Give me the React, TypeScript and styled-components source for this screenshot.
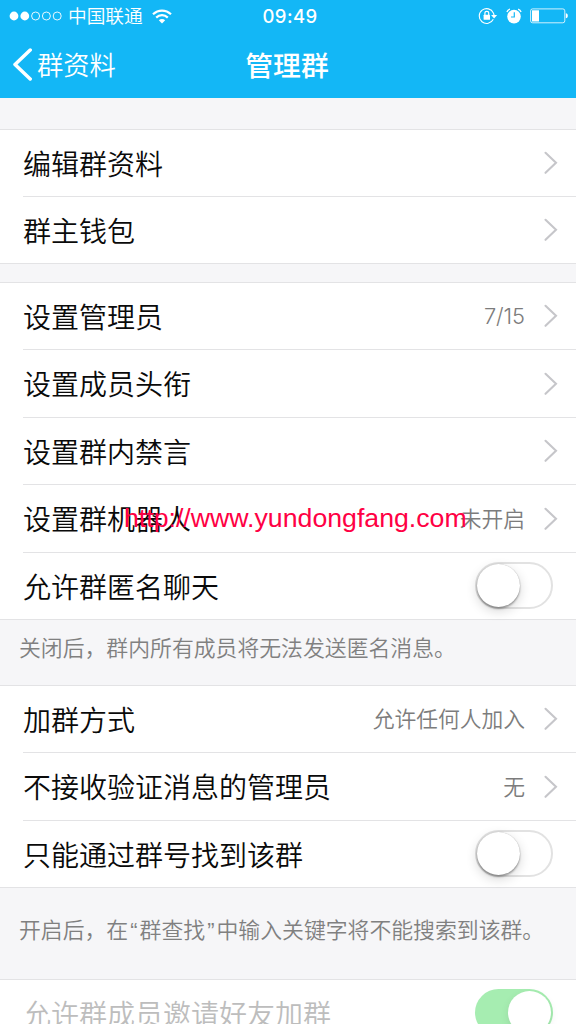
import React from "react";
import styled, { createGlobalStyle } from "styled-components";

const GlobalStyle = createGlobalStyle`
  * { box-sizing: border-box; }
  html, body { margin: 0; padding: 0; }
  body {
    background: #f6f6f8;
    font-family: Inter, "Noto Sans CJK SC", sans-serif;
    color: #0a0a0a;
  }
`;

const Screen = styled.main`
  position: relative;
  width: 576px;
  height: 1024px;
  overflow: hidden;
  background: #f6f6f8;
`;

const Header = styled.header`
  height: 98px;
  background: #13b7f6;
  color: #fff;
`;

const StatusBar = styled.div`
  display: grid;
  grid-template-columns: 1fr auto 1fr;
  align-items: center;
  height: 32px;
  padding: 0 8px 0 9px;
`;

const StatusLeft = styled.div`
  display: flex;
  align-items: center;
`;

const Carrier = styled.span`
  margin: -2px 9px 0 5px;
  font: 350 18.7px/32px "Noto Sans CJK SC", sans-serif;
`;

const Clock = styled.span`
  font-size: 18.5px;
  font-weight: 500;
  letter-spacing: 0.4px;
  line-height: 32px;
  padding-left: 3px;
`;

const StatusRight = styled.div`
  display: flex;
  justify-content: flex-end;
  align-items: center;
  gap: 8px;
`;

const NavBar = styled.nav`
  display: grid;
  grid-template-columns: 1fr auto 1fr;
  align-items: center;
  height: 66px;
  padding: 0 12px;
`;

const Back = styled.div`
  display: flex;
  align-items: center;
  gap: 4px;
`;

const BackLabel = styled.span`
  margin-top: -2px;
  font: 350 26.3px/60px "Noto Sans CJK SC", sans-serif;
`;

const Title = styled.h1`
  margin: -2px 2px 0 0;
  font: 500 27.8px/60px "Noto Sans CJK SC", sans-serif;
`;

const Group = styled.section<{ $top: number }>`
  margin-top: ${(p) => p.$top}px;
  background: #fff;
  border-top: 1px solid #e3e3e5;
  border-bottom: 1px solid #e3e3e5;
`;

const Row = styled.div<{ $height: number; $disabled?: boolean }>`
  display: flex;
  align-items: center;
  height: ${(p) => p.$height}px;
  margin-left: 23px;
  padding-right: 18px;
  color: ${(p) => (p.$disabled ? "#bdbdbd" : "#0a0a0a")};
  & + & { border-top: 1px solid #e3e3e5; }
`;

const Label = styled.span`
  flex: 1;
  margin-top: -1px;
  font: 350 28px/60px "Noto Sans CJK SC", sans-serif;
  white-space: nowrap;
`;

const Value = styled.span`
  margin-right: 19px;
  font-family: Inter, "Noto Sans CJK SC", sans-serif;
  font-size: 21.8px;
  font-weight: 350;
  letter-spacing: -0.05px;
  line-height: 60px;
  color: #7c7c7c;
`;

const Note = styled.p<{ $height: number; $lift: number }>`
  height: ${(p) => p.$height}px;
  margin: 0;
  padding: 0 0 ${(p) => p.$lift}px 19px;
  display: flex;
  align-items: center;
  font: 350 21.85px/32px "Noto Sans", "Noto Sans CJK SC", sans-serif;
  color: #808080;
  white-space: nowrap;
`;

const Quote = styled.span`
  display: inline-block;
  width: 11.4px;
  text-align: center;
  font-family: "Liberation Sans", Arial, sans-serif;
`;

const Switch = styled.span<{ $on?: boolean }>`
  display: flex;
  justify-content: ${(p) => (p.$on ? "flex-end" : "flex-start")};
  width: 78px;
  height: 47px;
  margin: -2px 5px 0 0;
  padding: ${(p) => (p.$on ? "2px" : "0")};
  border-radius: 24px;
  border: ${(p) => (p.$on ? "0" : "2px solid #e2e2e2")};
  background: ${(p) => (p.$on ? "#a6edb1" : "#fff")};
`;

const Knob = styled.span<{ $on?: boolean }>`
  width: 43px;
  height: 43px;
  border-radius: 50%;
  background: #fff;
  box-shadow: ${(p) =>
    p.$on
      ? "0 3px 8px rgba(0,0,0,.08)"
      : "0 2px 2px rgba(0,0,0,.3), 0 4px 12px rgba(0,0,0,.16), 0 0 1px rgba(0,0,0,.3)"};
`;

const Watermark = styled.div`
  position: absolute;
  left: 124px;
  top: 503px;
  font: 26.7px/30px "Liberation Sans", Arial, sans-serif;
  color: #ff0044;
  white-space: nowrap;
`;

const Signal = () => (
  <svg width="54" height="12" viewBox="0 0 54 12">
    {[0, 1, 2, 3, 4].map((i) => (
      <circle
        key={i}
        cx={5 + i * 10.8}
        cy="6"
        r={i < 2 ? 4.4 : 4}
        fill={i < 2 ? "#fff" : "none"}
        stroke="#fff"
        strokeWidth={i < 2 ? 0 : 0.9}
      />
    ))}
  </svg>
);

const Wifi = () => (
  <svg width="20" height="15" viewBox="0 0 20 15" fill="none" stroke="#fff" strokeWidth="2.2">
    <path d="M1 5.2C6.2.3 13.8.3 19 5.2" />
    <path d="M4.2 8.6C7.5 5.4 12.5 5.4 15.8 8.6" />
    <path d="M10 14.5L6.8 11.2C8.6 9.5 11.4 9.5 13.2 11.2Z" fill="#fff" stroke="none" />
  </svg>
);

const RotationLock = () => (
  <svg width="20" height="18" viewBox="0 0 20 18" fill="none" stroke="#fff">
    <path d="M15.3 12.3A7.4 7.4 0 1 1 15.4 6" strokeWidth="1.1" />
    <path d="M13.1 8H19.1L16.1 11.4Z" fill="#fff" stroke="none" />
    <path d="M15.4 6L16.2 8.5" strokeWidth="1.1" />
    <rect x="5.6" y="7.8" width="6.4" height="5" rx="0.5" fill="#fff" stroke="none" />
    <path d="M6.9 8V6.3a1.9 1.9 0 0 1 3.8 0V8" strokeWidth="1.2" />
  </svg>
);

const Alarm = () => (
  <svg width="16" height="16" viewBox="0 0 16 16" fill="none">
    <circle cx="8" cy="8.6" r="6.8" fill="#fff" />
    <path d="M8.3 4.3V9H5" stroke="#13b7f6" strokeWidth="1.2" />
    <path d="M.9 4Q1.7 1.9 3.9 1.2M15.1 4Q14.3 1.9 12.1 1.2" stroke="#fff" strokeWidth="1.3" />
  </svg>
);

const Battery = () => (
  <svg width="38" height="16" viewBox="0 0 38 16" fill="none">
    <rect x="0.6" y="0.9" width="34.2" height="13.9" rx="2" stroke="#fff" strokeOpacity="0.8" />
    <rect x="2" y="2.3" width="7" height="11.2" fill="#fff" />
    <path d="M35.8 5.3c1.4 0 2 1 2 2.5s-.6 2.5-2 2.5z" fill="#fff" />
  </svg>
);

const BackArrow = () => (
  <svg width="21" height="34" viewBox="0 0 21 34" fill="none">
    <path d="M18.2 2L3 16.5L18.2 31" stroke="#fff" strokeWidth="3.5" strokeLinecap="round" strokeLinejoin="round" />
  </svg>
);

const Chevron = () => (
  <svg width="14" height="24" viewBox="0 0 14 24" fill="none">
    <path d="M1.5 1.8L12 11.8L1.5 21.8" stroke="#c6c6ca" strokeWidth="2.1" strokeLinecap="round" />
  </svg>
);

type Item = { label: string; height: number; value?: string; toggle?: boolean };

const profile: Item[] = [
  { label: "编辑群资料", height: 66 },
  { label: "群主钱包", height: 67 },
];

const members: Item[] = [
  { label: "设置管理员", height: 66, value: "7/15" },
  { label: "设置成员头衔", height: 68 },
  { label: "设置群内禁言", height: 67 },
  { label: "设置群机器人", height: 68, value: "未开启" },
  { label: "允许群匿名聊天", height: 67, toggle: true },
];

const joining: Item[] = [
  { label: "加群方式", height: 66, value: "允许任何人加入" },
  { label: "不接收验证消息的管理员", height: 68, value: "无" },
  { label: "只能通过群号找到该群", height: 67, toggle: true },
];

const Rows = ({ items }: { items: Item[] }) => (
  <>
    {items.map((item) => (
      <Row key={item.label} $height={item.height}>
        <Label>{item.label}</Label>
        {item.value && <Value>{item.value}</Value>}
        {item.toggle ? (
          <Switch>
            <Knob />
          </Switch>
        ) : (
          <Chevron />
        )}
      </Row>
    ))}
  </>
);

const App: React.FC = () => (
  <Screen>
    <GlobalStyle />
    <Header>
      <StatusBar>
        <StatusLeft>
          <Signal />
          <Carrier>中国联通</Carrier>
          <Wifi />
        </StatusLeft>
        <Clock>09:49</Clock>
        <StatusRight>
          <RotationLock />
          <Alarm />
          <Battery />
        </StatusRight>
      </StatusBar>
      <NavBar>
        <Back>
          <BackArrow />
          <BackLabel>群资料</BackLabel>
        </Back>
        <Title>管理群</Title>
      </NavBar>
    </Header>
    <Group $top={31}>
      <Rows items={profile} />
    </Group>
    <Group $top={18}>
      <Rows items={members} />
    </Group>
    <Note $height={65} $lift={10}>关闭后，群内所有成员将无法发送匿名消息。</Note>
    <Group $top={0}>
      <Rows items={joining} />
    </Group>
    <Note $height={91} $lift={6}>
      <span>
        开启后，在<Quote>“</Quote>群查找<Quote>”</Quote>中输入关键字将不能搜索到该群。
      </span>
    </Note>
    <Group $top={0}>
      <Row $height={67} $disabled>
        <Label>允许群成员邀请好友加群</Label>
        <Switch $on>
          <Knob $on />
        </Switch>
      </Row>
    </Group>
    <Watermark>http://www.yundongfang.com</Watermark>
  </Screen>
);

export default App;
